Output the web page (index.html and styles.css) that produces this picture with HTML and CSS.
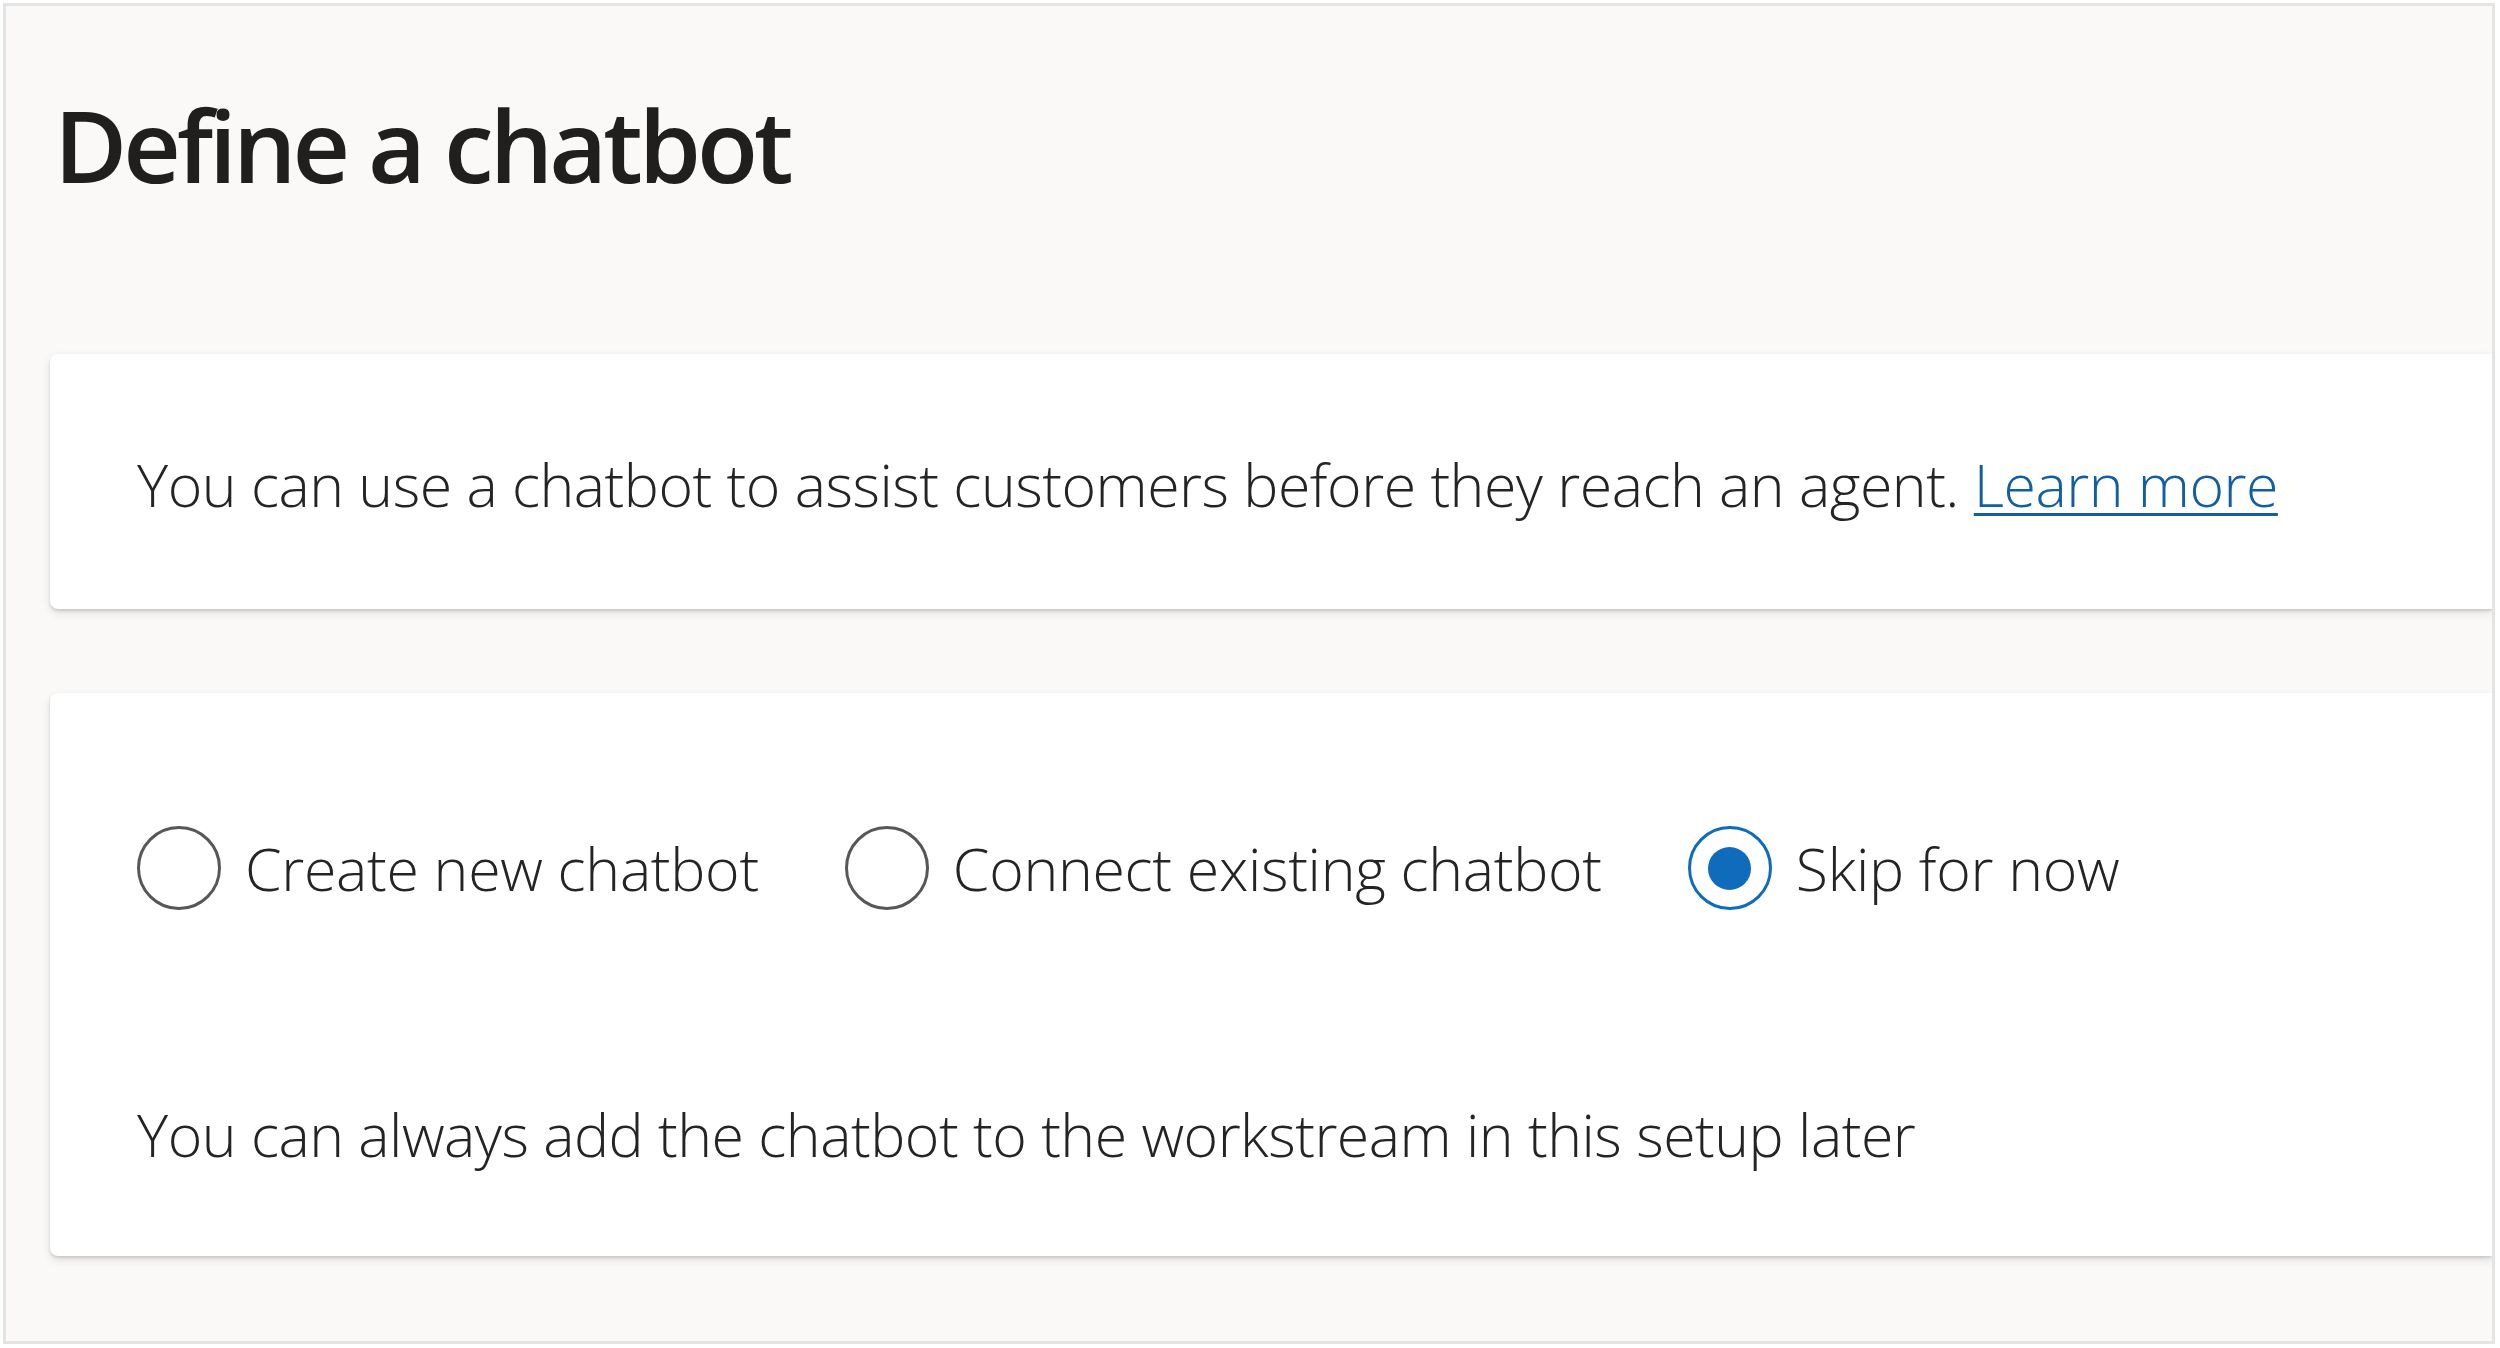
FILE: index.html
```html
<!DOCTYPE html>
<html lang="en">
<head>
<meta charset="utf-8">
<title>Define a chatbot</title>
<link rel="stylesheet" href="styles.css">
</head>
<body>
<div class="frame">
  <h1 class="title">Define a chatbot</h1>
  <section class="card card-intro">
    <p class="text">You can use a chatbot to assist customers before they reach an agent. <a class="link" href="#">Learn more</a></p>
  </section>
  <section class="card card-options">
    <div class="radio-group" role="radiogroup">
      <label class="radio">
        <span class="radio-circle"></span>
        <span class="radio-label">Create new chatbot</span>
      </label>
      <label class="radio">
        <span class="radio-circle"></span>
        <span class="radio-label">Connect existing chatbot</span>
      </label>
      <label class="radio is-checked">
        <span class="radio-circle"><span class="radio-dot"></span></span>
        <span class="radio-label">Skip for now</span>
      </label>
    </div>
    <p class="text hint">You can always add the chatbot to the workstream in this setup later</p>
  </section>
</div>
</body>
</html>
```
FILE: styles.css
```css
html, body {
  margin: 0;
  padding: 0;
  background: #ffffff;
}

body {
  font-family: "Open Sans", "Noto Sans", sans-serif;
  color: #242424;
}

.frame {
  box-sizing: border-box;
  margin: 3px 0 0 3px;
  width: 2492px;
  height: 1341px;
  border: 3px solid #e4e4e4;
  background: #faf9f8;
  padding: 70px 0 0 44px;
  overflow: hidden;
}

.title {
  margin: 0 0 0 4px;
  font-size: 100px;
  line-height: 136px;
  font-weight: 600;
  letter-spacing: -4px;
  color: #201f1e;
}

.card {
  background: #ffffff;
  border-radius: 8px 0 0 8px;
  box-shadow: 0 4px 10px rgba(0, 0, 0, 0.10), 0 2px 3px rgba(0, 0, 0, 0.12);
}

.card-intro {
  margin-top: 142px;
  padding: 90px 0 85px 87px;
}

.card-options {
  margin-top: 84px;
  padding: 133px 0 82px 87px;
}

.text {
  margin: 0;
  font-size: 59px;
  line-height: 80px;
  font-weight: 300;
  letter-spacing: -0.5px;
  color: #242424;
}

.link {
  color: #115ea3;
  text-decoration: underline;
  text-decoration-thickness: 3px;
  text-underline-offset: 6px;
}

.radio-group {
  display: flex;
  align-items: center;
  gap: 86px;
  height: 84px;
}

.radio {
  display: flex;
  align-items: center;
  gap: 24px;
}

.radio-circle {
  box-sizing: border-box;
  width: 84px;
  height: 84px;
  border: 3px solid #575757;
  border-radius: 50%;
  display: flex;
  align-items: center;
  justify-content: center;
}

.is-checked .radio-circle {
  border-color: #0f6cbd;
}

.radio-dot {
  width: 43px;
  height: 43px;
  border-radius: 50%;
  background: #0f6cbd;
}

.radio-label {
  font-size: 59px;
  line-height: 80px;
  font-weight: 300;
  letter-spacing: -0.3px;
  color: #242424;
}

.hint {
  margin-top: 184px;
}
```
